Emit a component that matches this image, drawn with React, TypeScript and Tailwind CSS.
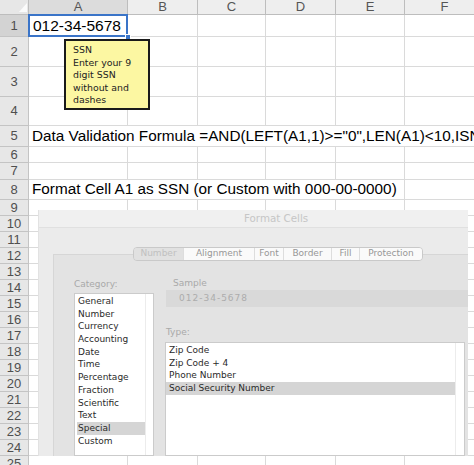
import React from 'react';

// row heights (rows 1..25) and column widths (A..F), measured off the sheet
const ROW_H = [22, 30, 30, 29, 21, 16, 17, 20, ...Array(17).fill(16)];
const COL_W = [99, 70, 68, 70, 69, 80];
const LETTERS = ['A', 'B', 'C', 'D', 'E', 'F'];

const CATEGORIES = [
  'General', 'Number', 'Currency', 'Accounting', 'Date', 'Time', 'Percentage',
  'Fraction', 'Scientific', 'Text', 'Special', 'Custom',
];
const TYPES = ['Zip Code', 'Zip Code + 4', 'Phone Number', 'Social Security Number'];
const TABS = [
  { label: 'Number', w: 50 },
  { label: 'Alignment', w: 71 },
  { label: 'Font', w: 29 },
  { label: 'Border', w: 48 },
  { label: 'Fill', w: 28 },
  { label: 'Protection', w: 62 },
];

const Cell = ({ w, children, className = '' }: { w: number; children?: React.ReactNode; className?: string }) => (
  <div
    className={`shrink-0 h-full border-r border-b border-[#dadada] ${className}`}
    style={{ width: w }}
  >
    {children}
  </div>
);

const RowHeader = ({ n, selected }: { n: number; selected?: boolean }) => (
  <div
    className={`w-[29px] shrink-0 h-full flex items-center justify-center border-r border-b border-[#c4c4c4] text-[13px] text-[#4f4f4f] ${
      selected ? 'bg-[#d3d3d3]' : 'bg-[#e7e7e7]'
    }`}
  >
    {n}
  </div>
);

const Sheet = () => (
  <div className="flex flex-col">
    {/* column headers */}
    <div className="flex h-[15px] shrink-0">
      <div className="w-[29px] shrink-0 h-full bg-[#e7e7e7] border-r border-b border-[#bdbdbd] flex justify-end items-start pr-[1px] pt-[3px]">
        <svg width="8" height="9" viewBox="0 0 8 9">
          <polygon points="8,0 8,9 0,9" fill="#fbfbfb" />
        </svg>
      </div>
      {LETTERS.map((l, i) => (
        <div
          key={l}
          className={`shrink-0 h-full flex items-center justify-center border-r border-b border-[#bdbdbd] text-[13px] text-[#555] ${
            i === 0 ? 'bg-[#dcdcdc]' : 'bg-[#eeeeee]'
          }`}
          style={{ width: COL_W[i] }}
        >
          {l}
        </div>
      ))}
    </div>

    {ROW_H.map((h, idx) => {
      const n = idx + 1;
      let cells: React.ReactNode;
      if (n === 1) {
        cells = (
          <>
            <Cell w={COL_W[0]} className="relative flex items-center pl-[4px] text-[15.5px] text-black">
              012-34-5678
              <div className="absolute -left-[1px] -top-[1px] w-[100px] h-[23px] border-2 border-[#3a74c8]" />
              <div className="absolute -right-[4px] -bottom-[4px] w-[6px] h-[6px] bg-[#3a74c8] border border-white" />
            </Cell>
            {COL_W.slice(1).map((w, i) => (
              <Cell key={i} w={w} />
            ))}
          </>
        );
      } else if (n === 5) {
        cells = (
          <Cell w={COL_W.reduce((a, b) => a + b, 0)} className="flex items-center pl-[3px] text-[15.3px] text-black whitespace-nowrap overflow-hidden">
            Data Validation Formula =AND(LEFT(A1,1)&gt;="0",LEN(A1)&lt;10,ISNUMBER(VALUE(A1)))
          </Cell>
        );
      } else if (n === 8) {
        cells = (
          <>
            <Cell w={376} className="flex items-center pl-[3px] text-[15.3px] text-black whitespace-nowrap overflow-hidden">
              Format Cell A1 as SSN (or Custom with 000-00-0000)
            </Cell>
            <Cell w={COL_W[5]} />
          </>
        );
      } else {
        cells = COL_W.map((w, i) => <Cell key={i} w={w} />);
      }
      return (
        <div key={n} className="flex shrink-0" style={{ height: h }}>
          <RowHeader n={n} selected={n === 1} />
          {cells}
        </div>
      );
    })}
  </div>
);

const Comment = () => (
  <div className="absolute left-[64px] top-[39px] w-[86px] h-[71px] bg-[#fcf7a2] border-2 border-[#1a1a1a] pl-[7px] pt-[3px] text-[9.4px] leading-[12.6px] text-[#222] font-['DejaVu_Sans',sans-serif] z-10">
    <div>SSN</div>
    <div>Enter your 9</div>
    <div>digit SSN</div>
    <div>without and</div>
    <div>dashes</div>
  </div>
);

const FormatCells = () => (
  <div className="absolute left-[38px] top-[210px] w-[430px] h-[246px] bg-[#ebebeb] overflow-hidden flex flex-col font-['DejaVu_Sans',sans-serif] z-20 border-l border-[#e2e2e2]">
    {/* title bar */}
    <div className="h-[18px] shrink-0 bg-[#f0f0f0] border-b border-[#e0e0e0] flex items-center pl-[205px] text-[10.3px] text-[#c6c6c6]">
      Format Cells
    </div>

    <div className="flex-1 flex flex-col pt-[19px]">
      {/* tabs */}
      <div className="ml-[94px] relative z-10 -mb-[7px] flex h-[14px] w-[290px] rounded-[4px] border border-[#c9c9c9] overflow-hidden text-[9px]">
        {TABS.map((t, i) => (
          <div
            key={t.label}
            className={`h-full shrink-0 flex items-center justify-center ${
              i === 0 ? 'bg-[#e1e1e1] text-[#c0c0c0]' : 'bg-[#fafafa] text-[#979797]'
            } ${i < TABS.length - 1 ? 'border-r border-[#dddddd]' : ''}`}
            style={{ width: t.w }}
          >
            {t.label}
          </div>
        ))}
      </div>

      {/* panel */}
      <div className="ml-[14px] flex-1 bg-[#e3e3e3] border-t border-l border-[#d6d6d6] flex pl-[20px] pt-[22px]">
        {/* category column */}
        <div className="w-[80px] shrink-0 flex flex-col">
          <div className="h-[14px] leading-[14px] text-[9px] text-[#a9a9a9] mb-[2px]">Category:</div>
          <div className="flex-1 bg-white border border-[#cbcbcb] flex">
            <div className="flex-1 pl-[2px] pt-[1px]">
              {CATEGORIES.map(c => (
                <div
                  key={c}
                  className={`pl-[1px] h-[12.7px] leading-[12.7px] text-[9px] text-[#2a2a2a] ${
                    c === 'Special' ? 'bg-[#d5d5d5]' : ''
                  }`}
                >
                  {c}
                </div>
              ))}
            </div>
            <div className="w-[8px] shrink-0 border-l border-[#ececec]" />
          </div>
        </div>

        {/* sample + type column */}
        <div className="flex-1 ml-[12px] flex flex-col">
          <div className="h-[14px] leading-[14px] pl-[7px] text-[9px] text-[#a9a9a9] -mt-[1px]">Sample</div>
          <div className="h-[17px] bg-[#d9d9d9] flex items-center pl-[13px] text-[9px] tracking-[1px] text-[#acacac]">
            012-34-5678
          </div>
          <div className="h-[14px] leading-[14px] mt-[18px] text-[9px] text-[#a9a9a9]">Type:</div>
          <div className="flex-1 mt-[3px] mr-[3px] -ml-[1px] bg-white border border-[#cbcbcb] flex">
            <div className="flex-1 pt-[1px]">
              {TYPES.map(t => (
                <div
                  key={t}
                  className={`pl-[3px] h-[12.7px] leading-[12.7px] text-[9px] text-[#2a2a2a] ${
                    t === 'Social Security Number' ? 'bg-[#d5d5d5]' : ''
                  }`}
                >
                  {t}
                </div>
              ))}
            </div>
            <div className="w-[9px] shrink-0 border-l border-[#ececec]" />
          </div>
        </div>
      </div>
    </div>
  </div>
);

export default function App() {
  return (
    <div className="relative w-[474px] h-[465px] overflow-hidden bg-white font-['Liberation_Sans',Arial,sans-serif]">
      <Sheet />
      <Comment />
      <FormatCells />
    </div>
  );
}
